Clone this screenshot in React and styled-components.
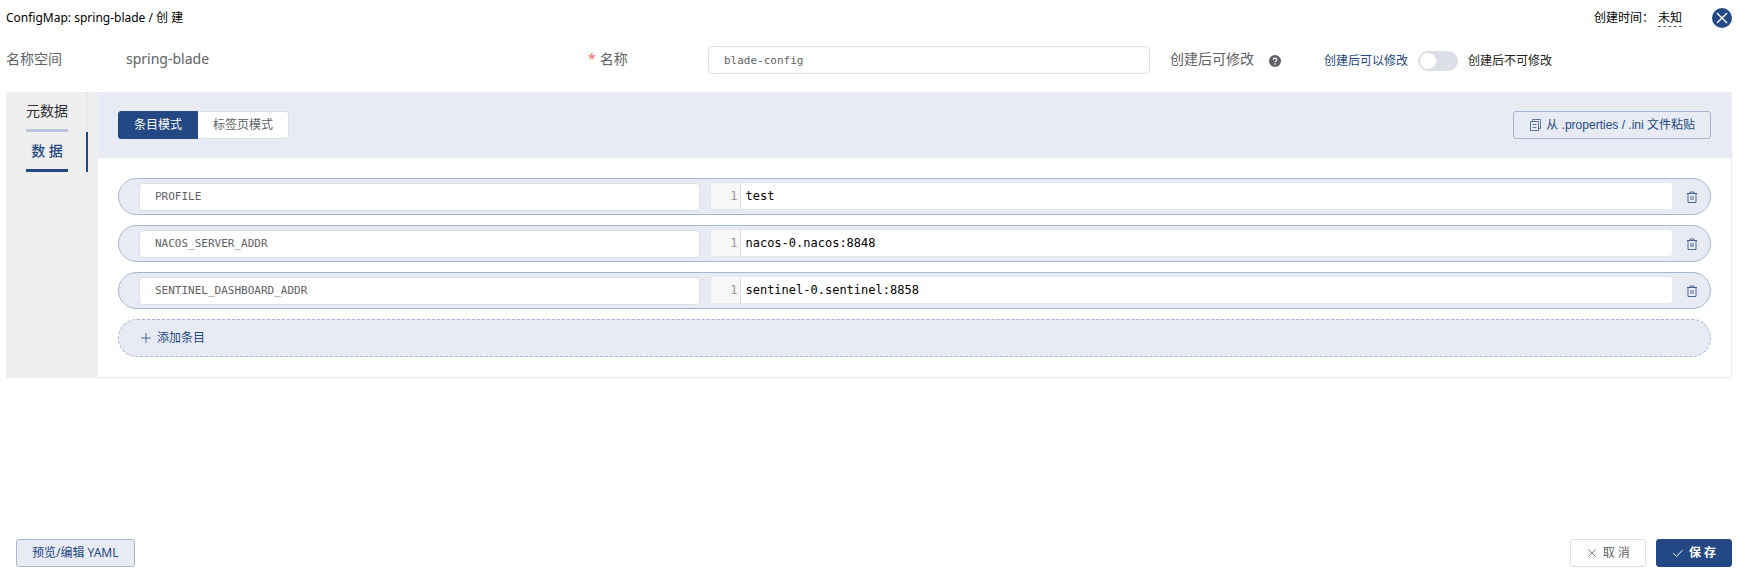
import React, { useState } from 'react';
import styled, { createGlobalStyle, css } from 'styled-components';

const color = {
  primary: '#234883',
  tint: '#e8ebf3',
  line: '#a7b6d0',
  border: '#dcdfe6',
  text: '#606266',
};

const sans = '"Noto Sans", "Noto Sans CJK SC", sans-serif';
const arial = '"Liberation Sans", "Noto Sans CJK SC", sans-serif';
const mono = '"DejaVu Sans Mono", monospace';

const GlobalStyle = createGlobalStyle`
  *, *::before, *::after { box-sizing: border-box; }
  body { margin: 0; background: #fff; color: #000; font: 12px/20px ${sans}; }
  button, input, textarea { font: inherit; margin: 0; }
`;

const Page = styled.main`
  min-height: 100vh;
  display: flex;
  flex-direction: column;
  padding: 8px 15px 4px 6px;
`;

const Header = styled.header`
  display: flex;
  align-items: center;
  justify-content: space-between;
  height: 20px;
`;

const Title = styled.h1`
  margin: 0;
  font-size: 12px;
  font-weight: 400;
`;

const HeaderSide = styled.div`
  display: flex;
  align-items: center;
`;

const Unknown = styled.span`
  line-height: 16px;
  margin: 0 30px 0 4px;
  border-bottom: 1px dashed #666;
`;

const CloseButton = styled.button`
  display: flex;
  align-items: center;
  justify-content: center;
  width: 20px;
  height: 20px;
  padding: 0;
  border: 0;
  border-radius: 50%;
  background: ${color.primary};
  color: #fff;
  cursor: pointer;
`;

const Form = styled.form`
  display: grid;
  grid-template-columns: repeat(3, 1fr);
  column-gap: 20px;
  margin: 18px 0;
  color: ${color.text};
  font-size: 14px;
`;

const Field = styled.div`
  display: grid;
  grid-template-columns: ${(p) => (p.$wide ? '154px' : '120px')} 1fr;
  align-items: center;
  height: 28px;
`;

const FieldLabel = styled.label`
  display: flex;
  align-items: center;
  gap: 4px;
  height: 26px;
  align-self: start;
`;

const Star = styled.span`
  color: #f56c6c;
`;

const HelpIcon = styled.svg`
  margin: 4px 0 0 11px;
`;

const FieldValue = styled.span`
  height: 26px;
  line-height: 26px;
  align-self: start;
`;

const TextInput = styled.input`
  width: 100%;
  min-width: 0;
  height: 28px;
  padding: 0 15px;
  border: 1px solid ${color.border};
  border-radius: 4px;
  background: #fff;
  color: ${color.text};
  font: 11px/26px ${mono};
  outline: none;
`;

const SwitchRow = styled.label`
  display: flex;
  align-items: center;
  gap: 10px;
  padding-top: 2px;
  font-size: 12px;
`;

const SwitchText = styled.span`
  color: ${(p) => (p.$active ? color.primary : '#222')};
`;

const Switch = styled.input`
  appearance: none;
  display: flex;
  align-items: center;
  width: 40px;
  height: 20px;
  padding: 2px;
  border-radius: 10px;
  background: ${color.border};
  cursor: pointer;
  &::before {
    content: '';
    width: 16px;
    height: 16px;
    border-radius: 50%;
    background: #fff;
  }
  &:checked { background: ${color.primary}; justify-content: flex-end; }
`;

const Panel = styled.section`
  display: grid;
  grid-template-columns: 92px 1fr;
`;

const Sidebar = styled.nav`
  background: #efefef;
  padding-right: 10px;
`;

const SideTab = styled.button`
  display: flex;
  width: 100%;
  height: 40px;
  padding: 0 18px 0 20px;
  border: 0;
  border-right: 2px solid ${(p) => (p.$active ? color.primary : '#e4e7ed')};
  background: none;
  color: ${(p) => (p.$active ? color.primary : '#303133')};
  font-size: 14px;
  font-weight: ${(p) => (p.$active ? 500 : 400)};
  cursor: pointer;
  span {
    width: 42px;
    height: 40px;
    line-height: 38px;
    white-space: nowrap;
    border-bottom: 3px solid ${(p) => (p.$active ? color.primary : '#bbc5da')};
  }
`;

const Content = styled.div`
  display: flex;
  flex-direction: column;
  border: solid ${color.tint};
  border-width: 0 1px 1px 0;
`;

const Toolbar = styled.div`
  display: flex;
  justify-content: space-between;
  padding: 19px 20px;
  background: ${color.tint};
`;

const ModeGroup = styled.div`
  display: flex;
`;

const buttonLook = {
  primary: css`
    background: ${color.primary};
    border-color: ${color.primary};
    color: #fff;
  `,
  plain: css`
    background: #fff;
    border-color: ${color.border};
    color: ${color.text};
  `,
  tint: css`
    background: ${color.tint};
    border-color: ${color.line};
    color: ${color.primary};
  `,
};

const Button = styled.button`
  display: inline-flex;
  align-items: center;
  justify-content: center;
  gap: 5px;
  height: 28px;
  padding: 0 15px;
  border: 1px solid;
  border-radius: 3px;
  font: ${(p) => (p.$bold ? 700 : 400)} 12px/20px ${(p) => (p.$arial ? arial : sans)};
  white-space: nowrap;
  cursor: pointer;
  ${(p) => buttonLook[p.$look]}
`;

const ModeButton = styled(Button)`
  &:first-child { border-radius: 3px 0 0 3px; }
  &:last-child { border-radius: 0 3px 3px 0; border-left: 0; }
`;

const Entries = styled.div`
  display: flex;
  flex-direction: column;
  gap: 10px;
  padding: 20px;
`;

const Entry = styled.div`
  display: grid;
  grid-template-columns: 7fr 12fr;
  column-gap: 10px;
  align-items: center;
  flex: 1;
  min-width: 0;
`;

const EntryRow = styled.div`
  display: flex;
  align-items: center;
  height: 37px;
  padding-left: 20px;
  border: 1px solid ${color.line};
  border-radius: 19px;
  background: ${color.tint};
`;

const Editor = styled.div`
  display: flex;
  height: 28px;
  margin-bottom: 2px;
  border: 1px solid #e4e7ed;
  border-radius: 4px;
  background: #fff;
  font: 12px/26px ${mono};
  overflow: hidden;
`;

const Gutter = styled.span`
  width: 30px;
  padding-right: 3px;
  border-right: 1px solid #ddd;
  background: #f7f7f7;
  color: #999;
  text-align: right;
`;

const CodeArea = styled.textarea`
  flex: 1;
  height: 26px;
  padding: 0 4px;
  border: 0;
  outline: none;
  resize: none;
  background: none;
  color: #000;
  line-height: 26px;
  white-space: pre;
  overflow: hidden;
`;

const DeleteButton = styled.button`
  display: flex;
  justify-content: center;
  width: 37px;
  padding: 0;
  border: 0;
  background: none;
  color: ${color.primary};
  cursor: pointer;
`;

const AddButton = styled.button`
  display: flex;
  align-items: center;
  gap: 5px;
  height: 38px;
  padding: 0 21px;
  border: 1px dashed ${color.line};
  border-radius: 19px;
  background: ${color.tint};
  color: ${color.primary};
  cursor: pointer;
`;

const Footer = styled.footer`
  display: flex;
  justify-content: space-between;
  margin-top: auto;
  padding-left: 10px;
`;

const Actions = styled.div`
  display: flex;
  gap: 10px;
`;

const Icon = ({ size = 12, children, width = 1 }) => (
  <svg width={size} height={size} viewBox="0 0 12 12" fill="none" stroke="currentColor" strokeWidth={width} aria-hidden="true">
    {children}
  </svg>
);

const CrossIcon = ({ size, width = 0.8 }) => (
  <Icon size={size} width={width}><path d="M2.2 2.2l7.6 7.6M9.8 2.2L2.2 9.8" /></Icon>
);
const CheckIcon = () => <Icon><path d="M1.2 6.2l3.2 3.2L10.8 3" /></Icon>;
const PlusIcon = () => <Icon width={0.8}><path d="M6 1v10M1 6h10" /></Icon>;
const CopyIcon = () => (
  <Icon width={0.7}>
    <path d="M3.5 2.5v-2h8v9h-2" />
    <path d="M1.5 2.5h8v9h-8z M3.5 5.5h4 M3.5 8.5h4" />
  </Icon>
);
const TrashIcon = () => (
  <Icon width={0.8}>
    <path d="M1 2.5h10M4 2.5v-1.5h4v1.5M2 2.5v9h8v-9" />
    <path d="M5 5v4M7 5v4" />
  </Icon>
);

const initialEntries = [
  { key: 'PROFILE', value: 'test' },
  { key: 'NACOS_SERVER_ADDR', value: 'nacos-0.nacos:8848' },
  { key: 'SENTINEL_DASHBOARD_ADDR', value: 'sentinel-0.sentinel:8858' },
];

export default function App() {
  const [entries, setEntries] = useState(initialEntries);
  const [locked, setLocked] = useState(false);

  const update = (index, patch) =>
    setEntries(entries.map((entry, i) => (i === index ? { ...entry, ...patch } : entry)));

  return (
    <Page>
      <GlobalStyle />
      <Header>
        <Title>ConfigMap: spring-blade / 创 建</Title>
        <HeaderSide>
          <span>创建时间：</span>
          <Unknown>未知</Unknown>
          <CloseButton type="button" aria-label="关闭"><CrossIcon size={16} width={1} /></CloseButton>
        </HeaderSide>
      </Header>

      <Form onSubmit={(e) => e.preventDefault()}>
        <Field>
          <FieldLabel as="span">名称空间</FieldLabel>
          <FieldValue>spring-blade</FieldValue>
        </Field>
        <Field>
          <FieldLabel htmlFor="name"><Star>*</Star>名称</FieldLabel>
          <TextInput id="name" defaultValue="blade-config" />
        </Field>
        <Field $wide>
          <FieldLabel htmlFor="locked">
            创建后可修改
            <HelpIcon width="12" height="12" viewBox="0 0 12 12" aria-hidden="true">
              <circle cx="6" cy="6" r="6" fill={color.text} />
              <path d="M4.2 4.8a1.8 1.6 0 1 1 2.6 1.4q-.8.4-.8 1.1" fill="none" stroke="#fff" strokeWidth="1.2" />
              <circle cx="6" cy="9" r=".8" fill="#fff" />
            </HelpIcon>
          </FieldLabel>
          <SwitchRow>
            <SwitchText $active={!locked}>创建后可以修改</SwitchText>
            <Switch id="locked" type="checkbox" role="switch" checked={locked} onChange={(e) => setLocked(e.target.checked)} />
            <SwitchText $active={locked}>创建后不可修改</SwitchText>
          </SwitchRow>
        </Field>
      </Form>

      <Panel>
        <Sidebar>
          <SideTab type="button"><span>元数据</span></SideTab>
          <SideTab type="button" $active><span>数 据</span></SideTab>
        </Sidebar>
        <Content>
          <Toolbar>
            <ModeGroup>
              <ModeButton type="button" $look="primary" $arial>条目模式</ModeButton>
              <ModeButton type="button" $look="plain" $arial>标签页模式</ModeButton>
            </ModeGroup>
            <Button type="button" $look="tint" $arial><CopyIcon />从 .properties / .ini 文件粘贴</Button>
          </Toolbar>
          <Entries>
            {entries.map((entry, i) => (
              <EntryRow key={i}>
                <Entry>
                  <TextInput aria-label="键" value={entry.key} onChange={(e) => update(i, { key: e.target.value })} />
                  <Editor>
                    <Gutter>1</Gutter>
                    <CodeArea aria-label="值" rows={1} spellCheck={false} value={entry.value} onChange={(e) => update(i, { value: e.target.value })} />
                  </Editor>
                </Entry>
                <DeleteButton type="button" aria-label="删除" onClick={() => setEntries(entries.filter((_, n) => n !== i))}>
                  <TrashIcon />
                </DeleteButton>
              </EntryRow>
            ))}
            <AddButton type="button" onClick={() => setEntries([...entries, { key: '', value: '' }])}>
              <PlusIcon />添加条目
            </AddButton>
          </Entries>
        </Content>
      </Panel>

      <Footer>
        <Button type="button" $look="tint">预览/编辑 YAML</Button>
        <Actions>
          <Button type="button" $look="plain"><CrossIcon />取 消</Button>
          <Button type="button" $look="primary" $bold><CheckIcon />保 存</Button>
        </Actions>
      </Footer>
    </Page>
  );
}
